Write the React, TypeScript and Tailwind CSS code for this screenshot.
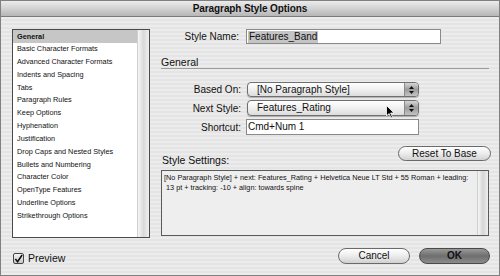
import React from "react"

const items = [
  "General",
  "Basic Character Formats",
  "Advanced Character Formats",
  "Indents and Spacing",
  "Tabs",
  "Paragraph Rules",
  "Keep Options",
  "Hyphenation",
  "Justification",
  "Drop Caps and Nested Styles",
  "Bullets and Numbering",
  "Character Color",
  "OpenType Features",
  "Underline Options",
  "Strikethrough Options",
]

function PopUp({ value }: { value: string }) {
  return (
    <div className="flex h-full w-[172px] rounded-[4px] border border-[#6f6f6f] bg-gradient-to-b from-[#ffffff] via-[#f0f0f0] to-[#dcdcdc] shadow-[0_1px_1px_rgba(0,0,0,0.25)] overflow-hidden">
      <div className="flex-1 pl-[9px] text-[10px] leading-[14px] text-[#111]">{value}</div>
      <div className="w-[14px] flex flex-col items-center justify-center gap-[2px] border-l border-[#8a8a8a] bg-gradient-to-b from-[#d6d6d6] via-[#9c9c9c] to-[#c4c4c4]">
        <svg width="5" height="3" viewBox="0 0 5 3">
          <path d="M0 3 L2.5 0 L5 3 Z" fill="#111" />
        </svg>
        <svg width="5" height="3" viewBox="0 0 5 3">
          <path d="M0 0 L2.5 3 L5 0 Z" fill="#111" />
        </svg>
      </div>
    </div>
  )
}

export default function App() {
  return (
    <div className="relative w-[500px] h-[276px] flex flex-col border border-[#808080] font-['Liberation_Sans',sans-serif] text-[#111] bg-[repeating-linear-gradient(180deg,#ececec_0px,#ececec_2px,#e4e4e4_2px,#e4e4e4_4px)] overflow-hidden">
      <div className="h-[16px] shrink-0 flex items-center justify-center bg-gradient-to-b from-[#ececec] via-[#d2d2d2] to-[#b6b6b6] border-b border-[#7a7a7a] text-[10px] font-bold tracking-[-0.1px]">
        Paragraph Style Options
      </div>

      <div className="flex flex-1">
        <div className="w-[160px] pl-[11px] pt-[12px] flex flex-col">
          <div className="w-[138px] h-[209px] flex border border-[#4a4a4a] bg-white">
            <div className="flex-1 flex flex-col">
              {items.map((t, i) => (
                <div
                  key={t}
                  className={
                    i === 0
                      ? "h-[13px] pl-[4px] text-[7.3px] leading-[13px] font-bold bg-[#c6c6c6]"
                      : "h-[12.85px] pl-[4px] text-[7.3px] leading-[12.85px]"
                  }
                >
                  {t}
                </div>
              ))}
            </div>
            <div className="w-[12px] bg-gradient-to-r from-[#f6f6f6] via-[#d9d9d9] to-[#efefef] border-l border-[#cfcfcf]" />
          </div>
          <div className="mt-[13px] flex items-center gap-[4px] pl-[1px]">
            <div className="w-[11px] h-[11px] border border-[#444] bg-gradient-to-b from-[#f4f4f4] to-[#c8c8c8] rounded-[2px] flex items-center justify-center">
              <svg width="10" height="10" viewBox="0 0 10 10">
                <path d="M1.5 5 L4 8 L9 0.5" fill="none" stroke="#111" strokeWidth="1.8" />
              </svg>
            </div>
            <span className="text-[10.5px]">Preview</span>
          </div>
        </div>

        <div className="w-[328px] pt-[12px] flex flex-col">
          <div className="flex items-center h-[15px]">
            <div className="w-[78px] text-right text-[10px]">Style Name:</div>
            <div className="ml-[7px] w-[195px] h-full border border-[#8a8a8a] bg-white flex items-center pl-[1px]">
              <span className="bg-[#c4c4c4] text-[10px] leading-[12px] px-[1px]">Features_Band</span>
            </div>
          </div>

          <div className="mt-[12px] h-[13px] text-[10.5px] leading-[12px] border-b border-[#9c9c9c]">General</div>

          <div className="mt-[13px] flex items-center h-[15px]">
            <div className="w-[80px] text-right text-[10px]">Based On:</div>
            <div className="ml-[6px] h-full">
              <PopUp value="[No Paragraph Style]" />
            </div>
          </div>

          <div className="mt-[3px] flex items-center h-[16px]">
            <div className="w-[80px] text-right text-[10px]">Next Style:</div>
            <div className="ml-[6px] h-full">
              <PopUp value="Features_Rating" />
            </div>
          </div>

          <div className="mt-[3px] flex items-center h-[16px]">
            <div className="w-[80px] text-right text-[10px]">Shortcut:</div>
            <div className="ml-[5px] w-[173px] h-full border border-[#8a8a8a] bg-white text-[10px] leading-[14px] pl-[1px]">
              Cmd+Num 1
            </div>
          </div>

          <div className="mt-[11px] flex items-end justify-between h-[20px]">
            <div className="text-[10.5px] leading-[12px] pl-[1px]">Style Settings:</div>
            <div className="-mr-[2px] self-start w-[93px] h-[15px] rounded-full border border-[#6a6a6a] bg-gradient-to-b from-[#ffffff] via-[#ececec] to-[#d2d2d2] text-[10px] leading-[13px] text-center">
              Reset To Base
            </div>
          </div>

          <div className="mt-[4px] h-[66px] flex border border-[#5a5a5a] bg-[#eeeeee]">
            <div className="flex-1 px-[2px] pt-[2px] text-[7.3px] leading-[10px] whitespace-nowrap overflow-hidden">
              [No Paragraph Style] + next: Features_Rating + Helvetica Neue LT Std + 55 Roman + leading:
              <br />
              &nbsp;13 pt + tracking: -10 + align: towards spine
            </div>
            <div className="w-[11px] bg-gradient-to-r from-[#f6f6f6] via-[#d6d6d6] to-[#efefef] border-l border-[#cfcfcf]" />
          </div>

          <div className="mt-[12px] flex justify-end gap-[9px] -mr-[1px]">
            <div className="w-[72px] h-[16px] rounded-full border border-[#6a6a6a] bg-gradient-to-b from-[#ffffff] via-[#ececec] to-[#d0d0d0] text-[10px] leading-[14px] text-center">
              Cancel
            </div>
            <div className="w-[71px] h-[16px] rounded-full border border-[#4a4a4a] bg-gradient-to-b from-[#9a9a9a] via-[#6e6e6e] to-[#8c8c8c] text-[10px] leading-[14px] text-center font-bold text-[#111]">
              OK
            </div>
          </div>
        </div>
      </div>

      <svg className="absolute left-[385px] top-[104px]" width="9" height="14" viewBox="0 0 9 14">
        <path d="M0.5 0.5 L0.5 11 L3 8.5 L5 13 L6.5 12.3 L4.6 8 L8 8 Z" fill="#000" stroke="#fff" strokeWidth="0.8" />
      </svg>
    </div>
  )
}
